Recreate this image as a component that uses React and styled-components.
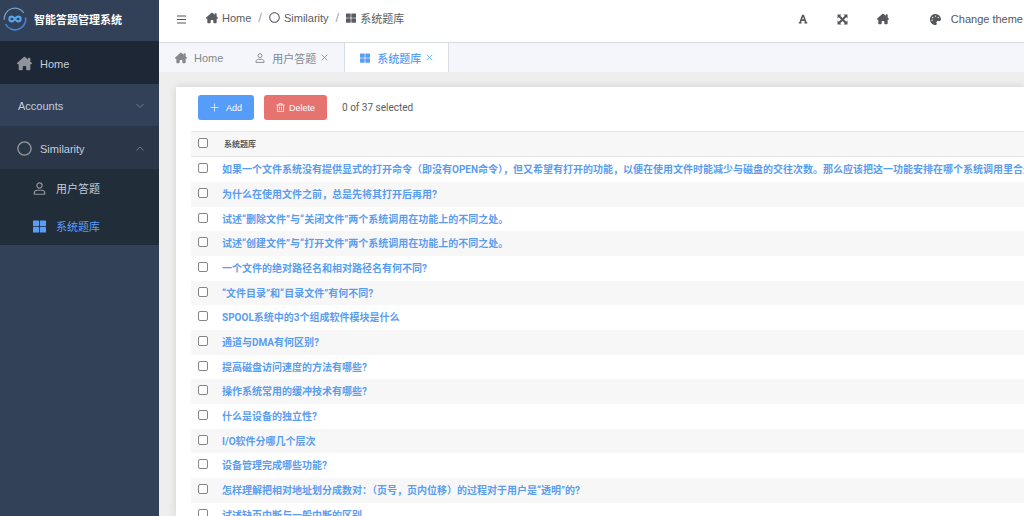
import { useState } from "react";
import styled, { createGlobalStyle } from "styled-components";
import { FaFont, FaPalette, FaRegCircle } from "react-icons/fa";
import { FaHouseChimney } from "react-icons/fa6";

const GlobalStyle = createGlobalStyle`
  * {
    box-sizing: border-box;
  }

  body {
    margin: 0;
    overflow: hidden;
    background: #eeeeee;
    color: #5a5c60;
    font-family: "Liberation Sans", "Noto Sans CJK SC", sans-serif;
    font-size: 11px;
  }

  button {
    font-family: inherit;
    cursor: pointer;
  }

  a {
    color: inherit;
    text-decoration: none;
  }
`;

const Shell = styled.div`
  display: flex;
  height: 100vh;
  overflow: hidden;
`;

const Sidebar = styled.nav`
  flex: 0 0 159px;
  background: #324157;
  color: #c3cedd;
`;

const Brand = styled.div`
  display: flex;
  align-items: center;
  gap: 7px;
  height: 41px;
  padding: 0 3px 4px;
  color: #ffffff;
  font-weight: 700;
`;

const MenuItem = styled.a`
  display: flex;
  align-items: center;
  gap: 8px;
  height: ${({ $tall }) => ($tall ? "43px" : "42px")};
  padding: 2px 15px 0 17px;
  background: ${({ $bg }) => $bg || "transparent"};

  > svg:first-child {
    flex: none;
    color: #909399;
  }
`;

const MenuLabel = styled.span`
  flex: 1;
  padding-left: ${({ $plain }) => ($plain ? "1px" : "0")};
`;

const SubMenu = styled.div`
  background: #222d3a;
`;

const SubItem = styled.a`
  display: flex;
  align-items: center;
  gap: 10px;
  height: 38px;
  padding-left: 33px;
  color: ${({ $active }) => ($active ? "#5a9df8" : "#c3cedd")};

  svg {
    color: ${({ $active }) => ($active ? "#5a9df8" : "#909399")};
  }
`;

const Main = styled.div`
  display: flex;
  flex: 1;
  flex-direction: column;
  min-width: 0;
`;

const TopBar = styled.header`
  display: flex;
  flex: none;
  align-items: center;
  justify-content: space-between;
  height: 42px;
  padding: 0 1px 4px 18px;
  background: #ffffff;
`;

const IconButton = styled.button`
  display: flex;
  align-items: center;
  gap: 10px;
  padding: 0;
  border: 0;
  background: none;
  color: #55575b;
  font-size: 11px;
`;

const TopLeft = styled.div`
  display: flex;
  align-items: center;
  gap: 20px;
`;

const Breadcrumb = styled.div`
  display: flex;
  align-items: center;
  gap: 7px;
  padding-bottom: 3px;
`;

const Crumb = styled.a`
  display: flex;
  align-items: center;
  gap: 4px;
`;

const Slash = styled.span`
  color: #a0a4ac;
  font-size: 13px;
`;

const Tools = styled.div`
  display: flex;
  align-items: center;
  gap: 29px;
`;

const ThemeButton = styled(IconButton)`
  margin-left: 12px;
`;

const Tabs = styled.div`
  display: flex;
  flex: none;
  height: 30px;
  border-top: 1px solid #d8dce5;
  background: #f4f6fb;
`;

const Tab = styled.div`
  display: flex;
  align-items: center;
  gap: 5px;
  padding: 0 15px;
  border-right: 1px solid ${({ $active }) => ($active ? "#d8dce5" : "transparent")};
  border-left: 1px solid ${({ $active }) => ($active ? "#d8dce5" : "transparent")};
  background: ${({ $active }) => ($active ? "#ffffff" : "transparent")};
  color: ${({ $active }) => ($active ? "#5a9df8" : "#85888e")};
  font-weight: ${({ $active }) => ($active ? 500 : 400)};

  a {
    display: flex;
    align-items: center;
    gap: 7px;
  }
`;

const CloseButton = styled.button`
  display: flex;
  padding: 0;
  border: 0;
  background: none;
  color: inherit;
`;

const Card = styled.main`
  flex: 1;
  min-height: 0;
  margin: 15px 0 0 17px;
  padding: 8px 0 0 15px;
  overflow: hidden;
  background: #ffffff;
  box-shadow: 0 0 8px rgba(0, 0, 0, 0.12);
`;

const Toolbar = styled.div`
  display: flex;
  align-items: center;
  gap: 10px;
  padding: 0 7px;
  margin-bottom: 11px;
`;

const ActionButton = styled.button`
  display: flex;
  align-items: center;
  justify-content: center;
  gap: ${({ $danger }) => ($danger ? "4px" : "7px")};
  height: 25px;
  padding: 0 12px;
  border: 0;
  border-radius: 3px;
  background: ${({ $danger }) => ($danger ? "#e6736f" : "#559df8")};
  color: #ffffff;
  font-size: 9px;
`;

const Counter = styled.span`
  margin-left: 5px;
  font-family: Roboto, "Noto Sans CJK SC", sans-serif;
  font-size: 10px;
`;

const Table = styled.table`
  width: 100%;
  border-collapse: collapse;
  table-layout: fixed;
  font-family: Roboto, "Noto Sans CJK SC", sans-serif;
  font-size: 10px;
  line-height: 14px;
`;

const HeadCell = styled.th`
  width: ${({ $check }) => ($check ? "31px" : "auto")};
  height: 25px;
  padding: ${({ $check }) => ($check ? "0 0 0 7px" : "2px 0 0 2px")};
  border-top: 1px solid #e8e8e8;
  border-bottom: 1px solid #e4e4e4;
  background: #f7f7f7;
  font-size: 8px;
  text-align: left;
`;

const Row = styled.tr`
  height: 25px;

  &:nth-child(3n) {
    height: 24px;
  }

  &:nth-child(even) {
    background: #f7f7f7;
  }
`;

const Cell = styled.td`
  padding: ${({ $check }) => ($check ? "0 0 0 7px" : "2px 0 0")};
  overflow: hidden;
  white-space: nowrap;
`;

const Checkbox = styled.input`
  display: block;
  width: 10px;
  height: 10px;
  margin: 0 0 2px;
  appearance: none;
  border: 1px solid #858585;
  border-radius: 2px;
  background: #ffffff;

  &:checked {
    background: #559df8;
  }
`;

const QuestionLink = styled.a`
  color: #5a9df0;
  font-weight: 700;
`;

const questions = [
  "如果一个文件系统没有提供显式的打开命令（即没有OPEN命令），但又希望有打开的功能，以便在使用文件时能减少与磁盘的交往次数。那么应该把这一功能安排在哪个系统调用里合适",
  "为什么在使用文件之前，总是先将其打开后再用?",
  "试述“删除文件”与“关闭文件”两个系统调用在功能上的不同之处。",
  "试述“创建文件”与“打开文件”两个系统调用在功能上的不同之处。",
  "一个文件的绝对路径名和相对路径名有何不同?",
  "“文件目录”和“目录文件”有何不同?",
  "SPOOL系统中的3个组成软件模块是什么",
  "通道与DMA有何区别?",
  "提高磁盘访问速度的方法有哪些?",
  "操作系统常用的缓冲技术有哪些?",
  "什么是设备的独立性?",
  "I/O软件分哪几个层次",
  "设备管理完成哪些功能?",
  "怎样理解把相对地址划分成数对：（页号，页内位移）的过程对于用户是“透明”的?",
  "试述缺页中断与一般中断的区别",
];

function Logo() {
  return (
    <svg width="24" height="24" viewBox="0 0 24 24" fill="none" aria-hidden="true">
      <path d="M1.3 12.8A10.7 10.7 0 0 1 20.8 5.8" stroke="#6f9fc9" strokeWidth="1.3" />
      <path d="M22.6 10.5A10.7 10.7 0 0 1 2.5 17" stroke="#3f86dc" strokeWidth="1.6" />
      <path
        d="M12 12C10.8 10.200 9.900 9.600 8.800 9.600a2.400 2.400 0 0 0 0 4.800c1.100 0 2-.600 3.200-2.400s2.100-2.400 3.200-2.400a2.400 2.400 0 0 1 0 4.800c-1.100 0-2-.600-3.200-2.400Z"
        stroke="#58a6ee"
        strokeWidth="2.1"
      />
    </svg>
  );
}

function TilesIcon({ size }) {
  return (
    <svg width={size} height={size} viewBox="0 0 13 13" fill="currentColor">
      <rect x="0" y="0.5" width="6.1" height="5.7" rx="0.6" />
      <rect x="6.9" y="0.5" width="6.1" height="5.7" rx="0.6" />
      <rect x="0" y="6.9" width="6.1" height="5.7" rx="0.6" />
      <rect x="6.9" y="6.9" width="6.1" height="5.7" rx="0.6" />
    </svg>
  );
}

function UserIcon({ size }) {
  return (
    <svg
      width={size}
      height={size}
      viewBox="0 0 13 14"
      fill="none"
      stroke="currentColor"
      strokeWidth="1.3"
      strokeLinejoin="round"
    >
      <circle cx="6.5" cy="3.7" r="2.8" />
      <path d="M.9 13.2v-1.100c0-1.900 1.300-3.200 3.100-3.200h5c1.800 0 3.100 1.300 3.100 3.200v1.100z" />
    </svg>
  );
}

function ExpandIcon() {
  return (
    <svg width="11" height="11" viewBox="0 0 11 11" fill="currentColor">
      <path d="M.5.5h4l-4 4zM10.500.5v4l-4-4zM.5 10.500v-4l4 4zM10.500 10.500h-4l4-4z" />
      <path d="M2 2l7 7M9 2L2 9" stroke="currentColor" strokeWidth="2.100" />
    </svg>
  );
}

function Chevron({ up }) {
  return (
    <svg width="8" height="6" viewBox="0 0 8 6" fill="none" stroke="#7f8b9c" strokeWidth="0.8">
      <path d={up ? "M.5 4.5 4 1l3.5 3.5" : "M.5 1 4 4.5 7.5 1"} />
    </svg>
  );
}

function CloseIcon() {
  return (
    <svg width="7" height="7" viewBox="0 0 7 7" stroke="currentColor" strokeWidth="0.8">
      <path d="M.7.7l5.6 5.6M6.3.7.7 6.3" />
    </svg>
  );
}

function PlusIcon() {
  return (
    <svg width="9" height="9" viewBox="0 0 9 9" stroke="currentColor" strokeWidth="0.7">
      <path d="M4.5.5v8M.5 4.5h8" />
    </svg>
  );
}

function TrashIcon() {
  return (
    <svg width="9" height="9" viewBox="0 0 9 9" fill="none" stroke="currentColor" strokeWidth="0.8">
      <path d="M.5 2h8M3 2V.6h3V2M1.4 2v6.4h6.2V2M3.5 3.7v3M5.5 3.7v3" />
    </svg>
  );
}

function MenuIcon() {
  return (
    <svg width="9" height="9" viewBox="0 0 9 9" stroke="currentColor">
      <path d="M0 1h9M0 4.5h9M0 8h9" strokeWidth="1.2" />
    </svg>
  );
}

export default function App() {
  const [selected, setSelected] = useState([]);

  const toggle = (index) =>
    setSelected((prev) =>
      prev.includes(index) ? prev.filter((i) => i !== index) : [...prev, index]
    );

  const toggleAll = () =>
    setSelected((prev) =>
      prev.length === questions.length ? [] : questions.map((_, i) => i)
    );

  return (
    <>
      <GlobalStyle />
      <Shell>
        <Sidebar>
          <Brand>
            <Logo />
            智能答题管理系统
          </Brand>
          <MenuItem href="#home" $tall $bg="#1d2735">
            <FaHouseChimney size={15} />
            <MenuLabel>Home</MenuLabel>
          </MenuItem>
          <MenuItem href="#accounts">
            <MenuLabel $plain>Accounts</MenuLabel>
            <Chevron />
          </MenuItem>
          <MenuItem href="#similarity" $tall $bg="#2b3648">
            <FaRegCircle size={15} />
            <MenuLabel>Similarity</MenuLabel>
            <Chevron up />
          </MenuItem>
          <SubMenu>
            <SubItem href="#answers">
              <UserIcon size={13} />
              用户答题
            </SubItem>
            <SubItem href="#questions" $active>
              <TilesIcon size={13} />
              系统题库
            </SubItem>
          </SubMenu>
        </Sidebar>

        <Main>
          <TopBar>
            <TopLeft>
              <IconButton aria-label="Toggle menu">
                <MenuIcon />
              </IconButton>
              <Breadcrumb>
                <Crumb href="#home">
                  <FaHouseChimney size={12} />
                  Home
                </Crumb>
                <Slash>/</Slash>
                <Crumb href="#similarity">
                  <FaRegCircle size={11} />
                  Similarity
                </Crumb>
                <Slash>/</Slash>
                <Crumb href="#questions">
                  <TilesIcon size={10} />
                  系统题库
                </Crumb>
              </Breadcrumb>
            </TopLeft>
            <Tools>
              <IconButton aria-label="Font size">
                <FaFont size={10} />
              </IconButton>
              <IconButton aria-label="Fullscreen">
                <ExpandIcon />
              </IconButton>
              <IconButton aria-label="Home">
                <FaHouseChimney size={12} />
              </IconButton>
              <ThemeButton>
                <FaPalette size={11} />
                Change theme
              </ThemeButton>
            </Tools>
          </TopBar>

          <Tabs>
            <Tab>
              <a href="#home">
                <FaHouseChimney size={12} />
                Home
              </a>
            </Tab>
            <Tab>
              <a href="#answers">
                <UserIcon size={10} />
                用户答题
              </a>
              <CloseButton aria-label="Close 用户答题">
                <CloseIcon />
              </CloseButton>
            </Tab>
            <Tab $active>
              <a href="#questions">
                <TilesIcon size={10} />
                系统题库
              </a>
              <CloseButton aria-label="Close 系统题库">
                <CloseIcon />
              </CloseButton>
            </Tab>
          </Tabs>

          <Card>
            <Toolbar>
              <ActionButton>
                <PlusIcon />
                Add
              </ActionButton>
              <ActionButton $danger>
                <TrashIcon />
                Delete
              </ActionButton>
              <Counter>{selected.length} of 37 selected</Counter>
            </Toolbar>
            <Table>
              <thead>
                <tr>
                  <HeadCell $check>
                    <Checkbox
                      type="checkbox"
                      aria-label="Select all"
                      checked={selected.length === questions.length}
                      onChange={toggleAll}
                    />
                  </HeadCell>
                  <HeadCell>系统题库</HeadCell>
                </tr>
              </thead>
              <tbody>
                {questions.map((question, i) => (
                  <Row key={question}>
                    <Cell $check>
                      <Checkbox
                        type="checkbox"
                        aria-label={question}
                        checked={selected.includes(i)}
                        onChange={() => toggle(i)}
                      />
                    </Cell>
                    <Cell>
                      <QuestionLink href={`#question-${i + 1}`}>{question}</QuestionLink>
                    </Cell>
                  </Row>
                ))}
              </tbody>
            </Table>
          </Card>
        </Main>
      </Shell>
    </>
  );
}
